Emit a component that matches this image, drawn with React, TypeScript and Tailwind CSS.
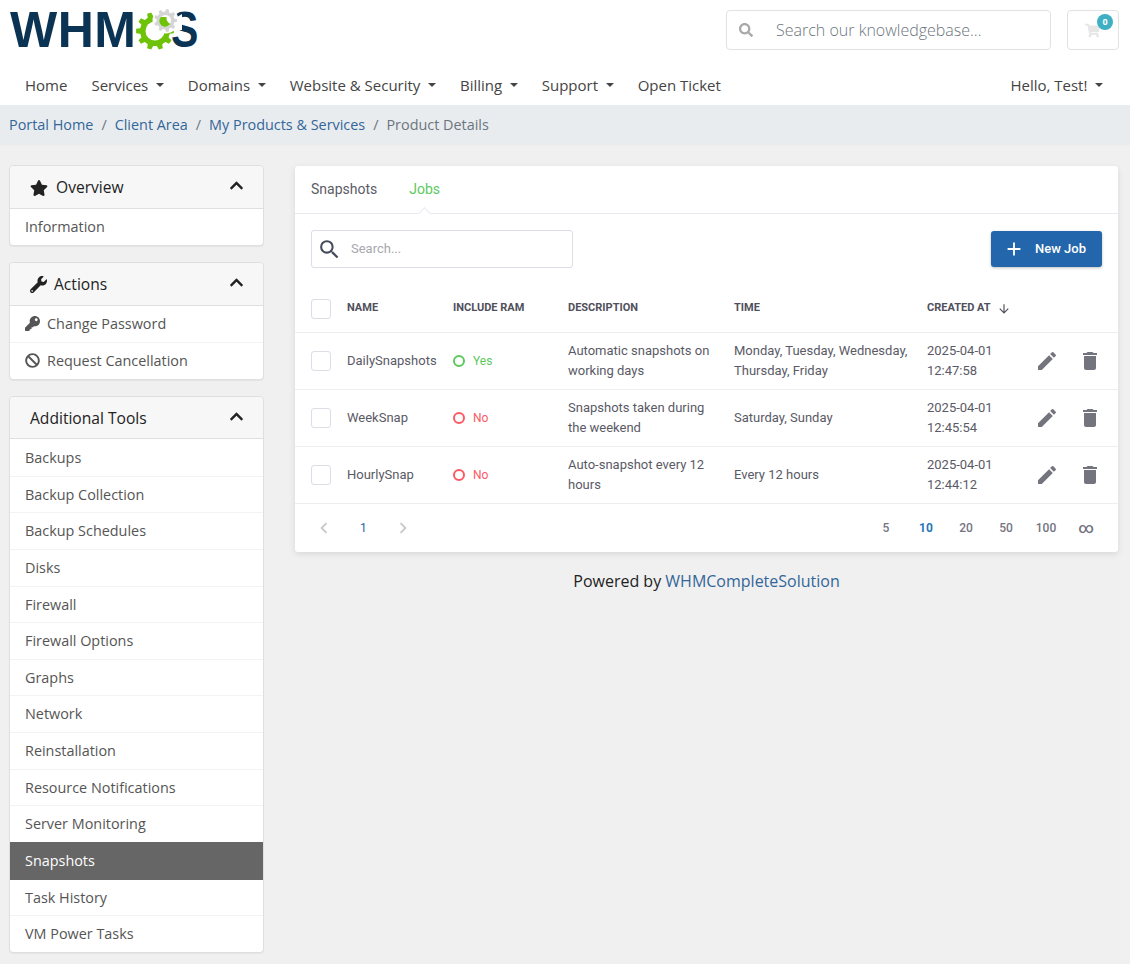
import { FaStar, FaWrench, FaKey, FaBan, FaSearch, FaShoppingCart, FaChevronUp } from "react-icons/fa";
import { MdEdit, MdDelete, MdAdd, MdSearch, MdArrowDownward, MdChevronLeft, MdChevronRight } from "react-icons/md";

const gearPath = (cx: number, cy: number, outer: number, inner: number, teeth: number) => {
  const pts: string[] = [];
  const step = (Math.PI * 2) / teeth;
  for (let i = 0; i < teeth; i++) {
    const a = i * step;
    const offsets: [number, number][] = [
      [-0.3, inner],
      [-0.18, outer],
      [0.18, outer],
      [0.3, inner],
    ];
    offsets.forEach(([o, r]) => {
      const t = a + o * step;
      pts.push(`${(cx + Math.cos(t) * r).toFixed(2)},${(cy + Math.sin(t) * r).toFixed(2)}`);
    });
  }
  return `M${pts.join("L")}Z`;
};

const Logo = () => (
  <div className="flex items-center w-[190px] h-[40px] text-[50px] leading-[40px] font-bold text-[#0b3353] font-['Liberation_Sans',sans-serif]">
    <span className="w-[161px] shrink-0 whitespace-nowrap tracking-[0.5px]">WHM</span>
    <span className="relative shrink-0 origin-left scale-x-[0.82]">
      S
    </span>
    <svg className="absolute left-[130px] top-[5px]" width="60" height="50" viewBox="120 -5 60 50">
      <path d={gearPath(145, 21, 19, 15, 10)} fill="#6ec207" />
      <circle cx="145" cy="21" r="9.500" fill="#fff" />
      <path d="M145 21 L172 4 L172 20 L160 21 Z" fill="#fff" />
      <circle cx="155.500" cy="10.500" r="13" fill="#fff" />
      <path d={gearPath(155.500, 10.500, 11.500, 9, 9)} fill="#d5d5d5" />
      <circle cx="155.500" cy="10.500" r="5.500" fill="#fff" />
      <path d="M151 7 a5.500 5.500 0 0 0 8 8 l1.500 -1 a7 7 0 0 1 -4 -7 Z" fill="#6ec207" />
    </svg>
  </div>
);

const Caret = () => <span className="inline-block ml-[7.6px] w-0 h-0 border-x-[4px] border-x-transparent border-t-[4px] border-t-[#444]" />;

const navItems: [string, boolean][] = [
  ["Home", false],
  ["Services", true],
  ["Domains", true],
  ["Website & Security", true],
  ["Billing", true],
  ["Support", true],
  ["Open Ticket", false],
];

const Header = () => (
  <header className="bg-white">
    <div className="flex items-start justify-between pl-[10px] pr-[11px] pt-[10px] h-[65px]">
      <Logo />
      <div className="flex gap-4">
        <div className="flex items-center w-[325px] h-[40px] border border-[#e2e2e2] rounded">
          <FaSearch className="ml-3 text-[14px] text-[#a8a8a8]" />
          <span className="ml-[23px] text-[16px] font-light text-[#6c757d]">Search our knowledgebase...</span>
        </div>
        <div className="relative flex items-center w-[52px] h-[40px] pl-[17px] border border-[#e2e2e2] rounded">
          <FaShoppingCart className="text-[15px] text-[#e6e6e6]" />
          <span className="absolute right-[5px] top-[3px] flex items-center justify-center w-4 h-4 rounded-full bg-[#3fb0c3] text-white text-[9px] font-bold">
            0
          </span>
        </div>
      </div>
    </div>
    <nav className="flex items-center justify-between h-[40px] pl-[25px] pr-[27px] text-[15px] text-[#444]">
      <div className="flex gap-6">
        {navItems.map(([label, caret]) => (
          <span key={label} className="flex items-center whitespace-nowrap">
            {label}
            {caret && <Caret />}
          </span>
        ))}
      </div>
      <span className="flex items-center">
        Hello, Test!
        <Caret />
      </span>
    </nav>
  </header>
);

const Breadcrumb = () => (
  <div className="flex items-center h-[40px] px-[9px] pb-[1px] bg-[#e9ecef] text-[14.4px]">
    <span className="text-[#336699]">Portal Home</span>
    <span className="px-2 text-[#6c757d]">/</span>
    <span className="text-[#336699]">Client Area</span>
    <span className="px-2 text-[#6c757d]">/</span>
    <span className="text-[#336699]">My Products &amp; Services</span>
    <span className="px-2 text-[#6c757d]">/</span>
    <span className="text-[#6c757d]">Product Details</span>
  </div>
);

type SideItem = { label: string; icon?: React.ReactNode; active?: boolean };

const SidePanel = ({ title, icon, items }: { title: string; icon?: React.ReactNode; items: SideItem[] }) => (
  <div className="border border-[#dfdfdf] rounded bg-white shadow-[0_1px_1px_rgba(0,0,0,0.05)]">
    <div className="flex items-center justify-between h-[42.5px] pt-[2px] pl-5 pr-[19px] bg-[#f7f7f7] border-b border-[#dfdfdf] rounded-t">
      <span className="flex items-center text-[15.6px] text-[#222]">
        {icon}
        {title}
      </span>
      <FaChevronUp className="mb-[5px] text-[15px] text-[#222]" />
    </div>
    {items.map((item, i) => (
      <div
        key={item.label}
        className={
          item.active
            ? "flex items-center h-[38px] -mb-[1px] relative pl-[15px] bg-[#666] text-white text-[14.4px]"
            : `flex items-center h-[36.6px] pl-[15px] text-[14.4px] text-[#555] ${i > 0 ? "border-t border-[#f3f3f3]" : ""}`
        }
      >
        {item.icon}
        {item.label}
      </div>
    ))}
  </div>
);

const Sidebar = () => (
  <aside className="flex flex-col gap-4 w-[255px] shrink-0">
    <SidePanel
      title="Overview"
      icon={<FaStar className="mr-[8px] text-[18px]" />}
      items={[{ label: "Information" }]}
    />
    <SidePanel
      title="Actions"
      icon={<FaWrench className="mr-[7px] text-[17px]" />}
      items={[
        { label: "Change Password", icon: <FaKey className="mr-[7px] text-[15px] text-[#555]" /> },
        { label: "Request Cancellation", icon: <FaBan className="mr-[7px] text-[15px] text-[#555]" /> },
      ]}
    />
    <SidePanel
      title="Additional Tools"
      items={[
        { label: "Backups" },
        { label: "Backup Collection" },
        { label: "Backup Schedules" },
        { label: "Disks" },
        { label: "Firewall" },
        { label: "Firewall Options" },
        { label: "Graphs" },
        { label: "Network" },
        { label: "Reinstallation" },
        { label: "Resource Notifications" },
        { label: "Server Monitoring" },
        { label: "Snapshots", active: true },
        { label: "Task History" },
        { label: "VM Power Tasks" },
      ]}
    />
  </aside>
);

const Checkbox = () => <span className="block w-5 h-5 rounded-[3px] border border-[#dcdde6] bg-white" />;

const jobs = [
  {
    name: "DailySnapshots",
    ram: true,
    desc: ["Automatic snapshots on", "working days"],
    time: ["Monday, Tuesday, Wednesday,", "Thursday, Friday"],
    created: ["2025-04-01", "12:47:58"],
  },
  {
    name: "WeekSnap",
    ram: false,
    desc: ["Snapshots taken during", "the weekend"],
    time: ["Saturday, Sunday"],
    created: ["2025-04-01", "12:45:54"],
  },
  {
    name: "HourlySnap",
    ram: false,
    desc: ["Auto-snapshot every 12", "hours"],
    time: ["Every 12 hours"],
    created: ["2025-04-01", "12:44:12"],
  },
];

const cols = "grid grid-cols-[52px_106px_115px_166px_193px_100px_91px] items-center";

const JobsCard = () => (
  <div className="bg-white rounded-[3px] shadow-[0_2px_6px_rgba(0,0,0,0.1)] font-['Roboto',sans-serif]">
    <div className="relative flex items-center gap-8 h-[48px] px-4 border-b border-[#e9e9ef] text-[14px]">
      <span className="text-[#5b5b66]">Snapshots</span>
      <span className="text-[#5dc95d]">Jobs</span>
      <span className="absolute left-[125px] bottom-[-5px] w-[9px] h-[9px] rotate-45 bg-white border-l border-t border-[#e9e9ef]" />
    </div>
    <div className="flex items-center justify-between h-[71px] pl-4 pr-4 pb-[1px]">
      <div className="flex items-center w-[262px] h-[38px] border border-[#dcdde6] rounded-[3px]">
        <MdSearch className="ml-[5px] text-[25px] text-[#444a5a]" />
        <span className="ml-[9px] text-[13px] text-[#a8a8ad]">Search...</span>
      </div>
      <div className="flex items-center w-[111px] h-[36px] pl-[12px] bg-[#2366ab] rounded-[3px] text-white text-[13px] font-medium shadow-[0_1px_3px_rgba(0,0,0,0.25)]">
        <MdAdd className="text-[22px]" />
        <span className="ml-[10px]">New Job</span>
      </div>
    </div>
    <div className={`${cols} h-[48px] border-b border-[#eeeef2] text-[11px] font-bold text-[#50505c]`}>
      <span className="pl-4"><Checkbox /></span>
      <span>NAME</span>
      <span>INCLUDE RAM</span>
      <span>DESCRIPTION</span>
      <span>TIME</span>
      <span className="flex items-center whitespace-nowrap">
        CREATED AT
        <MdArrowDownward className="ml-[6px] text-[14px]" />
      </span>
      <span />
    </div>
    {jobs.map((job) => (
      <div key={job.name} className={`${cols} h-[57px] border-b border-[#eeeef2] text-[13px] leading-[20px] text-[#5a5a66]`}>
        <span className="pl-4"><Checkbox /></span>
        <span>{job.name}</span>
        <span className={`flex items-center gap-[8px] text-[12px] ${job.ram ? "text-[#5dc95d]" : "text-[#fa5a64]"}`}>
          <span className={`block w-3 h-3 rounded-full border-2 ${job.ram ? "border-[#5dc95d]" : "border-[#fa5a64]"}`} />
          {job.ram ? "Yes" : "No"}
        </span>
        <span>{job.desc.map((l) => <span key={l} className="block whitespace-nowrap">{l}</span>)}</span>
        <span>{job.time.map((l) => <span key={l} className="block whitespace-nowrap">{l}</span>)}</span>
        <span>{job.created.map((l) => <span key={l} className="block whitespace-nowrap">{l}</span>)}</span>
        <span className="flex items-center gap-[19px] pl-[8px] text-[#74747f]">
          <MdEdit className="text-[24px]" />
          <MdDelete className="text-[24px]" />
        </span>
      </div>
    ))}
    <div className="flex items-center justify-between h-[48px] pl-[18px] pr-[12px] text-[12px] font-medium text-[#74747f]">
      <div className="flex items-center">
        <MdChevronLeft className="text-[22px] text-[#c8c8cc]" />
        <span className="ml-[25px] font-normal text-[#2366ab]">1</span>
        <MdChevronRight className="ml-[25px] text-[22px] text-[#c8c8cc]" />
      </div>
      <div className="flex items-center">
        {["5", "10", "20", "50", "100", "∞"].map((n) => (
          <span key={n} className={`w-10 text-center ${n === "10" ? "text-[#2a76b9] font-bold" : ""} ${n === "∞" ? "text-[15px]" : ""}`}>
            {n}
          </span>
        ))}
      </div>
    </div>
  </div>
);

export default function App() {
  return (
    <div className="min-h-[964px] bg-[#f0f0f0] font-['Open_Sans',sans-serif]">
      <Header />
      <Breadcrumb />
      <div className="flex gap-[31px] pl-[9px] pr-[12px] pt-5 pb-[10px]">
        <Sidebar />
        <main className="flex-1 min-w-0 pt-[1px]">
          <JobsCard />
          <p className="mt-[17px] text-center text-[16px] text-[#222]">
            Powered by <span className="text-[#336699]">WHMCompleteSolution</span>
          </p>
        </main>
      </div>
    </div>
  );
}
